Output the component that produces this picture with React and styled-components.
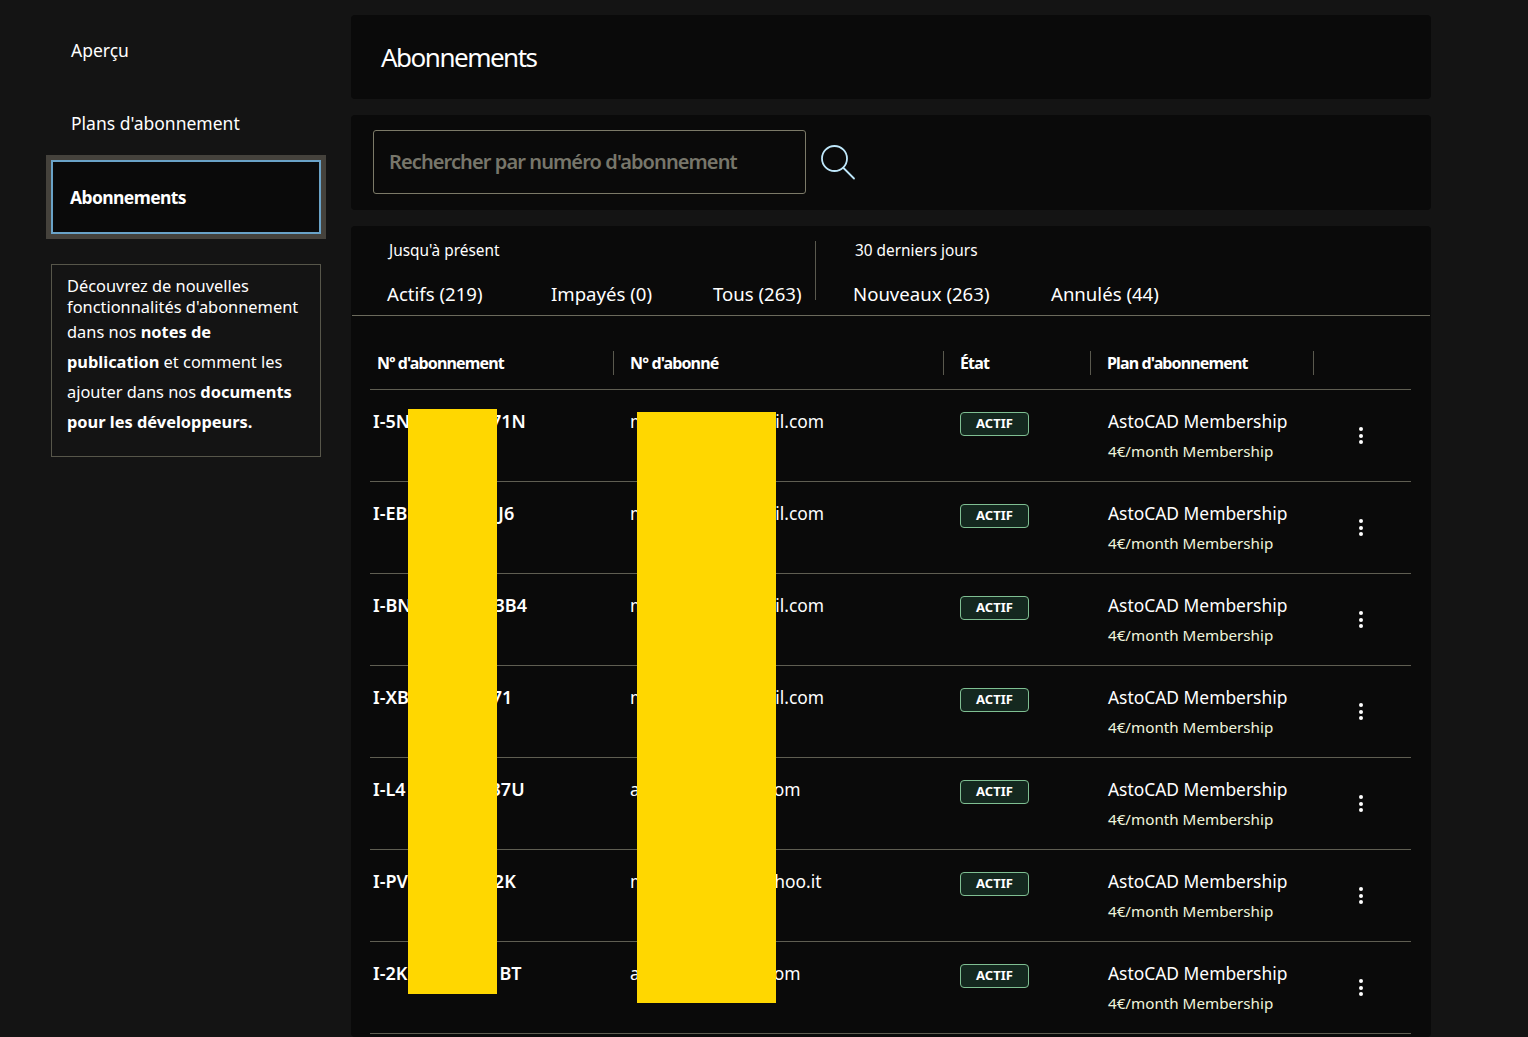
import React from "react";
import styled, { createGlobalStyle } from "styled-components";

const Global = createGlobalStyle`
  html, body { margin: 0; height: 100%; overflow: hidden; background: #141414; }
  body { font-family: "Noto Sans", "Liberation Sans", sans-serif; color: #fff; }
  #root { height: 100%; }
  * { box-sizing: border-box; }
`;

const Page = styled.div`
  display: grid;
  grid-template-columns: 351px 1080px;
  height: 100%;
`;
const Sidebar = styled.nav`
  display: flex;
  flex-direction: column;
  padding: 14px 0 0 51px;
`;
const NavItem = styled.a`
  display: flex;
  align-items: center;
  width: 270px;
  height: ${p => (p.$active ? 74 : 73)}px;
  padding: 0 0 ${p => (p.$active ? 0 : 2)}px 20px;
  font-size: 17.5px;
  font-weight: ${p => (p.$active ? 700 : 400)};
  letter-spacing: ${p => (p.$active ? "-0.6px" : "0")};
  ${p => p.$active && `
    background: #0a0a0a;
    border: 2px solid #6aa3c8;
    outline: 5px solid #45423c;
    padding-left: 17px;
  `}
`;
const Note = styled.aside`
  width: 270px;
  height: 193px;
  margin-top: 30px;
  padding: 10px 15px;
  border: 1px solid #57564a;
  font-size: 16.4px;
  line-height: 30px;
  b { font-weight: 700; }
`;
const NoteHead = styled.div`
  line-height: 21px;
`;
const Main = styled.main`
  display: flex;
  flex-direction: column;
  gap: 16px;
  padding-top: 15px;
  min-width: 0;
`;
const Panel = styled.section`
  background: #0a0a0a;
  border-radius: 4px;
`;
const TitlePanel = styled(Panel)`
  display: flex;
  align-items: center;
  height: 84px;
  padding: 0 0 1px 30px;
`;
const Title = styled.h1`
  margin: 0;
  font-size: 26px;
  font-weight: 400;
  letter-spacing: -1.5px;
`;
const SearchPanel = styled(Panel)`
  display: flex;
  align-items: center;
  gap: 14px;
  height: 95px;
  padding: 0 0 1px 22px;
`;
const SearchBox = styled.div`
  display: flex;
  align-items: center;
  width: 433px;
  height: 64px;
  padding: 0 0 2px 15px;
  border: 1px solid #7c7a68;
  border-radius: 3px;
  color: #77766a;
  font-size: 20px;
  font-weight: 600;
  letter-spacing: -0.9px;
`;
const ListPanel = styled(Panel)`
  flex: 1;
  position: relative;
`;
const Tabs = styled.div`
  display: flex;
  height: 90px;
  margin: 0 1px;
  border-bottom: 1px solid #6b6a5c;
`;
const TabGroup = styled.div`
  display: flex;
  flex-direction: column;
  padding-top: 15px;
  padding-left: ${p => p.$pad}px;
`;
const GroupLabel = styled.div`
  padding-left: 2px;
  font-size: 15.4px;
  line-height: 20px;
`;
const TabRow = styled.div`
  display: flex;
  margin-top: 21px;
  font-size: 18.6px;
  line-height: 24px;
`;
const Tab = styled.span`
  width: ${p => p.$w}px;
  white-space: nowrap;
`;
const VDivider = styled.div`
  width: 1px;
  height: 59px;
  margin: 15px 37px 0 10px;
  background: #5a594e;
`;
const Table = styled.div`
  margin: 0 20px 0 19px;
`;
const Grid = `
  display: grid;
  grid-template-columns: 244px 330px 147px 223px 97px;
  border-bottom: 1px solid #5f5e52;
`;
const HeadRow = styled.div`
  ${Grid}
  height: 74px;
  padding-top: 35px;
`;
const HeadCell = styled.div`
  display: flex;
  align-items: center;
  height: 24px;
  padding-left: ${p => p.$pad ?? 16}px;
  border-right: ${p => (p.$last ? 0 : "1px solid #5a594e")};
  font-size: 16px;
  font-weight: 700;
  letter-spacing: -0.85px;
`;
const Row = styled.div`
  ${Grid}
  height: 92px;
  padding-top: 18px;
`;
const IdCell = styled.div`
  padding-left: 3px;
  font-size: 18px;
  font-weight: 600;
  line-height: 26px;
`;
const Gap = styled.span`
  display: inline-block;
  width: ${p => p.$w}px;
`;
const MailCell = styled.div`
  padding-left: 16px;
  font-size: 17.4px;
  line-height: 26px;
`;
const StatusCell = styled.div`
  padding: 4px 0 0 16px;
`;
const Badge = styled.span`
  display: flex;
  align-items: center;
  justify-content: center;
  width: 69px;
  height: 24px;
  padding-bottom: 2px;
  background: #14281f;
  border: 1px solid #7fbf92;
  border-radius: 4px;
  font-size: 13px;
  font-weight: 700;
`;
const PlanCell = styled.div`
  padding-left: 17px;
`;
const PlanName = styled.div`
  font-size: 17.4px;
  line-height: 26px;
`;
const PlanPrice = styled.div`
  margin-top: 6px;
  color: #f0f5dc;
  font-size: 15.2px;
  line-height: 22px;
`;
const Menu = styled.div`
  display: flex;
  flex-direction: column;
  gap: 2.5px;
  width: 4px;
  margin: 19px 0 0 45px;
`;
const Dot = styled.i`
  width: 4px;
  height: 4px;
  border-radius: 50%;
  background: #fff;
`;
const Redaction = styled.div`
  position: absolute;
  left: ${p => p.$x}px;
  top: ${p => p.$y}px;
  width: ${p => p.$w}px;
  height: ${p => p.$h}px;
  background: #ffd700;
`;

const rows = [
  ["I-5N", 81, "71N", "m", 129, "il.com"],
  ["I-EB", 91, "J6", "m", 129, "il.com"],
  ["I-BN", 83, "3B4", "m", 129, "il.com"],
  ["I-XB", 83, "71", "m", 129, "il.com"],
  ["I-L4", 85, "37U", "a", 134, "om"],
  ["I-PV", 86, "2K", "m", 128, "hoo.it"],
  ["I-2K", 92, "BT", "a", 134, "om"],
];

export default function App() {
  return (
    <Page>
      <Global />
      <Sidebar>
        <NavItem>Aperçu</NavItem>
        <NavItem>Plans d'abonnement</NavItem>
        <NavItem $active>Abonnements</NavItem>
        <Note>
          <NoteHead>Découvrez de nouvelles fonctionnalités d'abonnement</NoteHead>
          dans nos <b>notes de publication</b> et comment les ajouter dans nos <b>documents pour les développeurs.</b>
        </Note>
      </Sidebar>
      <Main>
        <TitlePanel><Title>Abonnements</Title></TitlePanel>
        <SearchPanel>
          <SearchBox>Rechercher par numéro d'abonnement</SearchBox>
          <svg width="36" height="36" viewBox="0 0 36 36" fill="none" stroke="#bfe8fb" strokeWidth="1.8" strokeLinecap="round">
            <circle cx="14.5" cy="14.5" r="12.5" />
            <path d="M23.5 24l10.5 10.5" />
          </svg>
        </SearchPanel>
        <ListPanel>
          <Tabs>
            <TabGroup $pad={35}>
              <GroupLabel>Jusqu'à présent</GroupLabel>
              <TabRow><Tab $w={164}>Actifs (219)</Tab><Tab $w={162}>Impayés (0)</Tab><Tab $w={92}>Tous (263)</Tab></TabRow>
            </TabGroup>
            <VDivider />
            <TabGroup $pad={0}>
              <GroupLabel>30 derniers jours</GroupLabel>
              <TabRow><Tab $w={198}>Nouveaux (263)</Tab><Tab $w={110}>Annulés (44)</Tab></TabRow>
            </TabGroup>
          </Tabs>
          <Table>
            <HeadRow>
              <HeadCell $pad={7}>Nº d'abonnement</HeadCell>
              <HeadCell>N° d'abonné</HeadCell>
              <HeadCell>État</HeadCell>
              <HeadCell>Plan d'abonnement</HeadCell>
              <HeadCell $last />
            </HeadRow>
            {rows.map((r, i) => (
              <Row key={i}>
                <IdCell>{r[0]}<Gap $w={r[1]} />{r[2]}</IdCell>
                <MailCell>{r[3]}<Gap $w={r[4]} />{r[5]}</MailCell>
                <StatusCell><Badge>ACTIF</Badge></StatusCell>
                <PlanCell>
                  <PlanName>AstoCAD Membership</PlanName>
                  <PlanPrice>4€/month Membership</PlanPrice>
                </PlanCell>
                <Menu><Dot /><Dot /><Dot /></Menu>
              </Row>
            ))}
          </Table>
          <Redaction $x={57} $y={183} $w={89} $h={585} />
          <Redaction $x={286} $y={186} $w={139} $h={591} />
        </ListPanel>
      </Main>
    </Page>
  );
}
